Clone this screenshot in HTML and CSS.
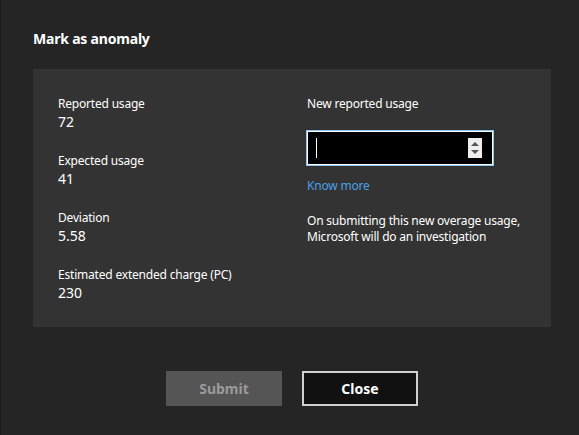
FILE: index.html
```html
<!DOCTYPE html>
<html lang="en">
<head>
<meta charset="utf-8">
<title>Mark as anomaly</title>
<link rel="stylesheet" href="styles.css">
</head>
<body>
<div class="dialog">
  <h1 class="title">Mark as anomaly</h1>
  <div class="panel">
    <div class="col-left">
      <div class="field">
        <div class="label">Reported usage</div>
        <div class="value">72</div>
      </div>
      <div class="field">
        <div class="label">Expected usage</div>
        <div class="value">41</div>
      </div>
      <div class="field">
        <div class="label">Deviation</div>
        <div class="value">5.58</div>
      </div>
      <div class="field">
        <div class="label">Estimated extended charge (PC)</div>
        <div class="value">230</div>
      </div>
    </div>
    <div class="col-right">
      <div class="label">New reported usage</div>
      <div class="input">
        <span class="caret"></span>
        <span class="spinner">
          <svg width="14" height="20" viewBox="0 0 14 20">
            <polygon points="3,8 11,8 7,4" fill="#555"/>
            <polygon points="3,12 11,12 7,16" fill="#555"/>
          </svg>
        </span>
      </div>
      <div class="link-wrap"><a class="link" href="#">Know more</a></div>
      <p class="note">On submitting this new overage usage,<br>Microsoft will do an investigation</p>
    </div>
  </div>
  <div class="actions">
    <button class="btn btn-submit" disabled>Submit</button>
    <button class="btn btn-close">Close</button>
  </div>
</div>
</body>
</html>
```
FILE: styles.css
```css
html, body {
  margin: 0;
  padding: 0;
  height: 100%;
}
body {
  background: #252525;
  font-family: "Segoe UI", "Noto Sans", "Open Sans", sans-serif;
  color: #ffffff;
  border-left: 1px solid #1c1c1c;
  box-sizing: border-box;
}
.dialog {
  padding: 29px 28px 0 32px;
}
.title {
  margin: 0 0 20px 0;
  font-size: 14px;
  line-height: 20px;
  font-weight: 700;
  letter-spacing: -0.2px;
}
.panel {
  background: #333333;
  height: 258px;
  box-sizing: border-box;
  padding: 27px 0 0 25px;
  display: flex;
}
.col-left {
  width: 249px;
  display: flex;
  flex-direction: column;
  gap: 22px;
}
.field {
  display: flex;
  flex-direction: column;
  gap: 1px;
}
.label {
  font-size: 12px;
  line-height: 16px;
  letter-spacing: -0.2px;
}
.value {
  font-size: 14px;
  line-height: 18px;
}
.col-right {
  width: 188px;
}
.input {
  margin-top: 19px;
  width: 186px;
  height: 34px;
  box-sizing: border-box;
  background: #000;
  border: 1px solid #ffffff;
  box-shadow: 0 0 0 1px #8cc6f4;
  display: flex;
  align-items: center;
  justify-content: space-between;
  padding: 0 10px 0 8px;
}
.caret {
  width: 1px;
  height: 20px;
  background: #fff;
}
.spinner {
  width: 14px;
  height: 20px;
  background: #eeeeee;
  display: flex;
}
.link-wrap {
  margin-top: 14px;
  height: 14px;
}
.link {
  display: block;
  font-size: 12px;
  line-height: 14px;
  color: #4ba0e6;
  text-decoration: none;
  letter-spacing: -0.2px;
}
.note {
  margin: 20px 0 0 0;
  font-size: 12px;
  line-height: 16px;
  letter-spacing: -0.2px;
  white-space: nowrap;
}
.actions {
  display: flex;
  justify-content: center;
  gap: 20px;
  margin-top: 44px;
}
.btn {
  width: 116px;
  height: 35px;
  font-family: inherit;
  font-size: 14px;
  font-weight: 700;
  box-sizing: border-box;
  padding: 0;
}
.btn-submit {
  background: #555555;
  color: #9a9a9a;
  border: none;
}
.btn-close {
  background: #111111;
  color: #ffffff;
  border: 2px solid #cfcfcf;
}
```
